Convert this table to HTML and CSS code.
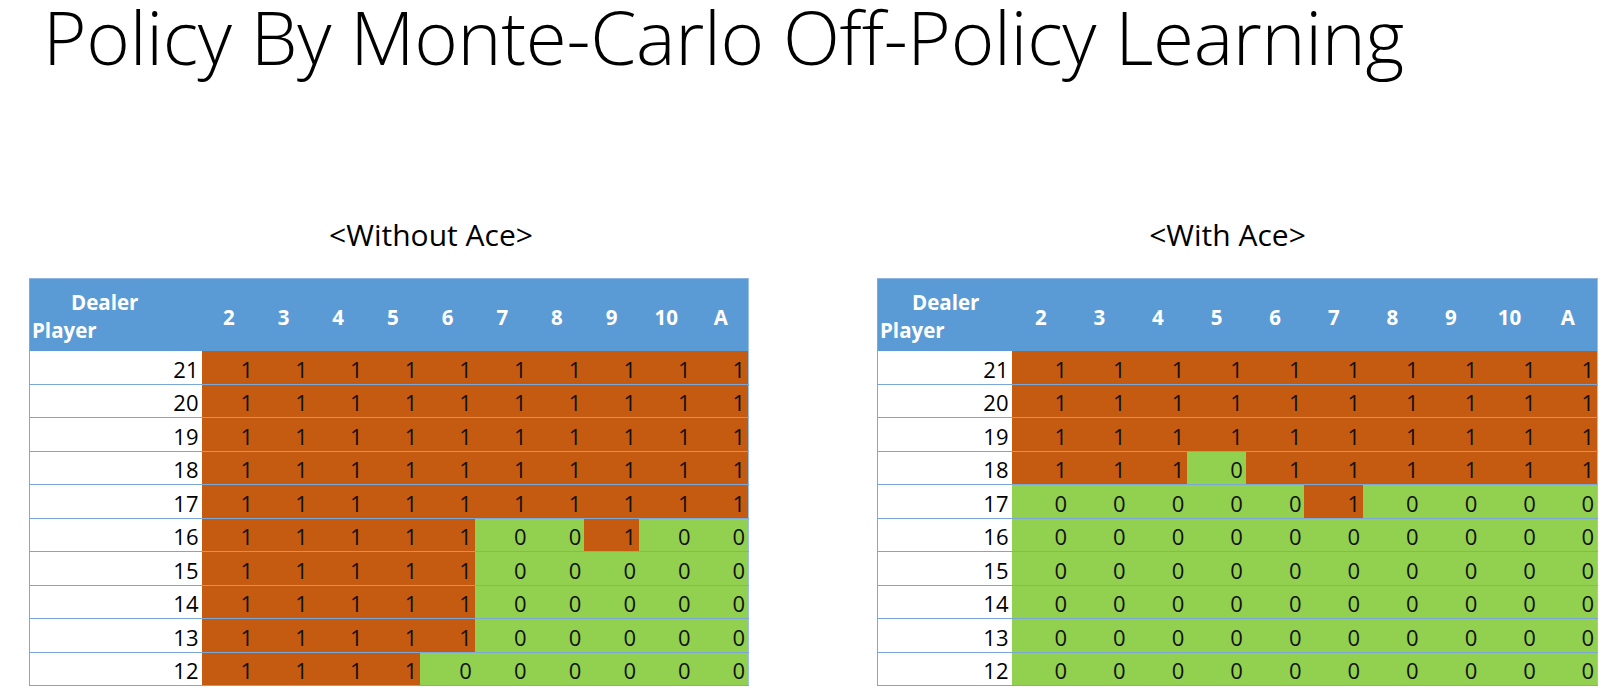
FILE: index.html
```html
<!DOCTYPE html>
<html lang="en">
<head>
<meta charset="utf-8">
<title>Policy By Monte-Carlo Off-Policy Learning</title>
<link rel="stylesheet" href="styles.css">
</head>
<body>
<h1 class="title">Policy By Monte-Carlo Off-Policy Learning</h1>
<div class="panels">
  <section class="panel panel-left">
    <h2 class="caption">&lt;Without Ace&gt;</h2>
    <table class="grid grid-left">
      <colgroup><col class="c-player"><col span="10" class="c-data"></colgroup>
      <thead>
        <tr><th class="corner"><span class="dealer">Dealer</span><span class="player">Player</span></th><th>2</th><th>3</th><th>4</th><th>5</th><th>6</th><th>7</th><th>8</th><th>9</th><th>10</th><th>A</th></tr>
      </thead>
      <tbody>
        <tr><td class="lbl">21</td><td class="h">1</td><td class="h">1</td><td class="h">1</td><td class="h">1</td><td class="h">1</td><td class="h">1</td><td class="h">1</td><td class="h">1</td><td class="h">1</td><td class="h">1</td></tr>
        <tr><td class="lbl">20</td><td class="h">1</td><td class="h">1</td><td class="h">1</td><td class="h">1</td><td class="h">1</td><td class="h">1</td><td class="h">1</td><td class="h">1</td><td class="h">1</td><td class="h">1</td></tr>
        <tr><td class="lbl">19</td><td class="h">1</td><td class="h">1</td><td class="h">1</td><td class="h">1</td><td class="h">1</td><td class="h">1</td><td class="h">1</td><td class="h">1</td><td class="h">1</td><td class="h">1</td></tr>
        <tr><td class="lbl">18</td><td class="h">1</td><td class="h">1</td><td class="h">1</td><td class="h">1</td><td class="h">1</td><td class="h">1</td><td class="h">1</td><td class="h">1</td><td class="h">1</td><td class="h">1</td></tr>
        <tr><td class="lbl">17</td><td class="h">1</td><td class="h">1</td><td class="h">1</td><td class="h">1</td><td class="h">1</td><td class="h">1</td><td class="h">1</td><td class="h">1</td><td class="h">1</td><td class="h">1</td></tr>
        <tr><td class="lbl">16</td><td class="h">1</td><td class="h">1</td><td class="h">1</td><td class="h">1</td><td class="h">1</td><td class="s">0</td><td class="s">0</td><td class="h">1</td><td class="s">0</td><td class="s">0</td></tr>
        <tr><td class="lbl">15</td><td class="h">1</td><td class="h">1</td><td class="h">1</td><td class="h">1</td><td class="h">1</td><td class="s">0</td><td class="s">0</td><td class="s">0</td><td class="s">0</td><td class="s">0</td></tr>
        <tr><td class="lbl">14</td><td class="h">1</td><td class="h">1</td><td class="h">1</td><td class="h">1</td><td class="h">1</td><td class="s">0</td><td class="s">0</td><td class="s">0</td><td class="s">0</td><td class="s">0</td></tr>
        <tr><td class="lbl">13</td><td class="h">1</td><td class="h">1</td><td class="h">1</td><td class="h">1</td><td class="h">1</td><td class="s">0</td><td class="s">0</td><td class="s">0</td><td class="s">0</td><td class="s">0</td></tr>
        <tr><td class="lbl">12</td><td class="h">1</td><td class="h">1</td><td class="h">1</td><td class="h">1</td><td class="s">0</td><td class="s">0</td><td class="s">0</td><td class="s">0</td><td class="s">0</td><td class="s">0</td></tr>
      </tbody>
    </table>
  </section>
  <section class="panel panel-right">
    <h2 class="caption">&lt;With Ace&gt;</h2>
    <table class="grid grid-right">
      <colgroup><col class="c-player"><col span="10" class="c-data"></colgroup>
      <thead>
        <tr><th class="corner"><span class="dealer">Dealer</span><span class="player">Player</span></th><th>2</th><th>3</th><th>4</th><th>5</th><th>6</th><th>7</th><th>8</th><th>9</th><th>10</th><th>A</th></tr>
      </thead>
      <tbody>
        <tr><td class="lbl">21</td><td class="h">1</td><td class="h">1</td><td class="h">1</td><td class="h">1</td><td class="h">1</td><td class="h">1</td><td class="h">1</td><td class="h">1</td><td class="h">1</td><td class="h">1</td></tr>
        <tr><td class="lbl">20</td><td class="h">1</td><td class="h">1</td><td class="h">1</td><td class="h">1</td><td class="h">1</td><td class="h">1</td><td class="h">1</td><td class="h">1</td><td class="h">1</td><td class="h">1</td></tr>
        <tr><td class="lbl">19</td><td class="h">1</td><td class="h">1</td><td class="h">1</td><td class="h">1</td><td class="h">1</td><td class="h">1</td><td class="h">1</td><td class="h">1</td><td class="h">1</td><td class="h">1</td></tr>
        <tr><td class="lbl">18</td><td class="h">1</td><td class="h">1</td><td class="h">1</td><td class="s">0</td><td class="h">1</td><td class="h">1</td><td class="h">1</td><td class="h">1</td><td class="h">1</td><td class="h">1</td></tr>
        <tr><td class="lbl">17</td><td class="s">0</td><td class="s">0</td><td class="s">0</td><td class="s">0</td><td class="s">0</td><td class="h">1</td><td class="s">0</td><td class="s">0</td><td class="s">0</td><td class="s">0</td></tr>
        <tr><td class="lbl">16</td><td class="s">0</td><td class="s">0</td><td class="s">0</td><td class="s">0</td><td class="s">0</td><td class="s">0</td><td class="s">0</td><td class="s">0</td><td class="s">0</td><td class="s">0</td></tr>
        <tr><td class="lbl">15</td><td class="s">0</td><td class="s">0</td><td class="s">0</td><td class="s">0</td><td class="s">0</td><td class="s">0</td><td class="s">0</td><td class="s">0</td><td class="s">0</td><td class="s">0</td></tr>
        <tr><td class="lbl">14</td><td class="s">0</td><td class="s">0</td><td class="s">0</td><td class="s">0</td><td class="s">0</td><td class="s">0</td><td class="s">0</td><td class="s">0</td><td class="s">0</td><td class="s">0</td></tr>
        <tr><td class="lbl">13</td><td class="s">0</td><td class="s">0</td><td class="s">0</td><td class="s">0</td><td class="s">0</td><td class="s">0</td><td class="s">0</td><td class="s">0</td><td class="s">0</td><td class="s">0</td></tr>
        <tr><td class="lbl">12</td><td class="s">0</td><td class="s">0</td><td class="s">0</td><td class="s">0</td><td class="s">0</td><td class="s">0</td><td class="s">0</td><td class="s">0</td><td class="s">0</td><td class="s">0</td></tr>
      </tbody>
    </table>
  </section>
</div>
</body>
</html>
```
FILE: styles.css
```css
* { box-sizing: border-box; }
html, body { margin: 0; padding: 0; background: #fff; }
body {
  width: 1616px;
  height: 695px;
  overflow: hidden;
  font-family: "Open Sans", "Noto Sans", sans-serif;
  color: #000;
}
.title {
  margin: 0;
  padding: 0 0 0 43px;
  font-family: "Open Sans", sans-serif;
  font-weight: 300;
  font-size: 74.5px;
  line-height: 72px;
  letter-spacing: -0.3px;
  white-space: nowrap;
  height: 72px;
}
.panels {
  display: flex;
  gap: 128px;
  padding: 145px 0 0 29px;
}
.panel-left { width: 720px; }
.panel-right { width: 721px; }
.caption {
  margin: 0;
  font-weight: 400;
  font-size: 30px;
  line-height: 36px;
  height: 61px;
  white-space: nowrap;
  text-align: center;
}
.panel-left .caption { padding-left: 84px; }
.panel-right .caption { padding-right: 20px; }
.grid {
  border-collapse: collapse;
  table-layout: fixed;
  width: 100%;
  border-left: 1px solid #7aa9dc;
  border-right: 1px solid #9cc2e8;
  border-bottom: 1px solid #7aa9dc;
}
.grid-left .c-player { width: 172px; }
.grid-right .c-player { width: 134px; }
.grid thead th {
  background: #5b9bd5;
  color: #fff;
  font-weight: 700;
  font-size: 20.5px;
  height: 72px;
  padding: 5px 0 0;
  text-align: center;
  vertical-align: middle;
  border-top: 1px solid #8cb5e2;
}
.grid thead th.corner {
  padding: 9px 0 0;
  vertical-align: top;
  text-align: left;
  line-height: 28px;
}
.corner span { display: block; }
.grid-left .dealer { padding-left: 41px; }
.grid-left .player { padding-left: 2px; }
.grid-right .dealer { padding-left: 34px; }
.grid-right .player { padding-left: 2px; }
.grid tbody td {
  height: 33.5px;
  padding: 3px 3px 0 0;
  text-align: right;
  font-size: 22px;
  line-height: 28px;
  border-bottom: 1px solid #7aa6d8;
}
.grid td.lbl { background: #fff; }
.grid td.h { background: #c55a11; color: #111; }
.grid td.s { background: #92d050; color: #111; }
```
